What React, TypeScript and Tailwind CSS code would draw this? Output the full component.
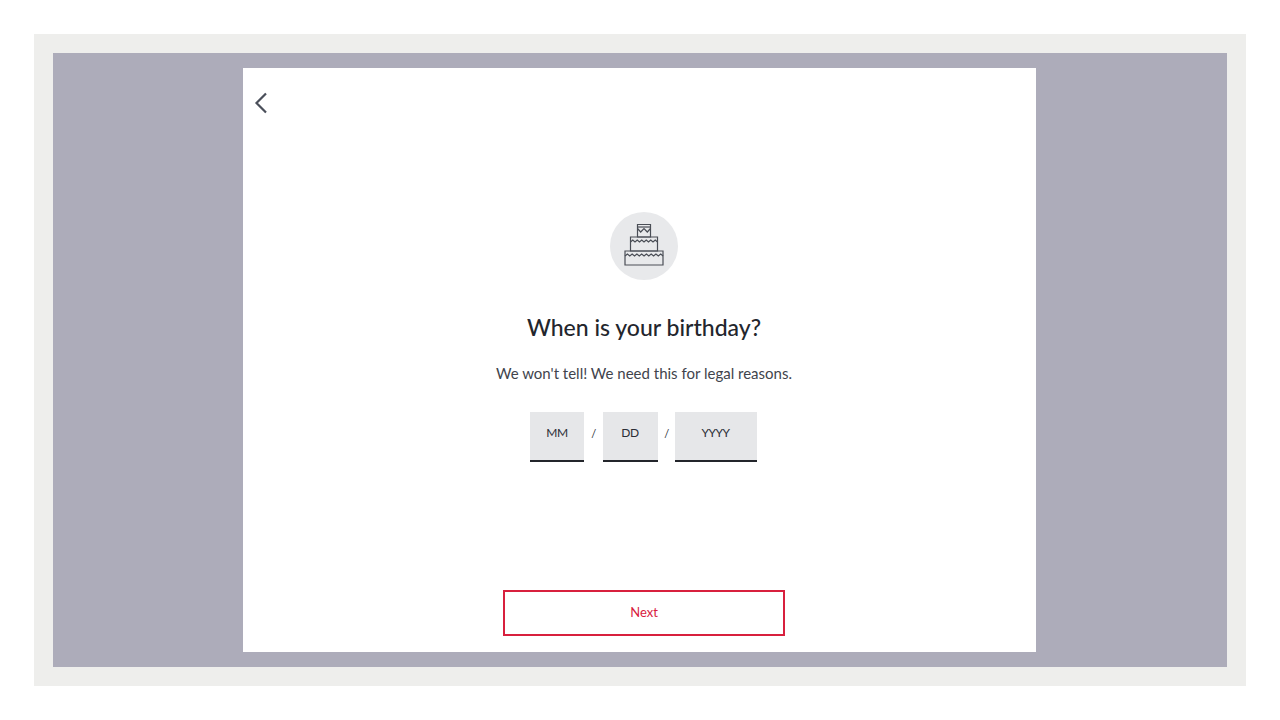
export default function App() {
  return (
    <div className="h-screen bg-white p-[34px] font-['Lato',sans-serif]">
      <div className="h-[652px] w-[1212px] bg-[#eeeeec] p-[19px]">
        <div className="h-[614px] bg-[#adacba] pl-[190px] pt-[15px]">
          <div className="h-[584px] w-[793px] bg-white flex flex-col">
            {/* Back */}
            <div className="h-[144px] pl-[9px] pt-[23px]">
              <svg width="18" height="24" viewBox="0 0 18 24" fill="none" className="text-[#4a4f5a]">
                <path d="M14 2.500 L4.500 12 L14 21.500" stroke="currentColor" strokeWidth="2.2" />
              </svg>
            </div>

            <div className="flex flex-col items-center pl-[9px]">
              {/* Cake */}
              <div className="w-[68px] h-[68px] rounded-full bg-[#e8e9eb] flex items-center justify-center pb-[3px]">
                <svg width="40" height="44" viewBox="0 0 40 44" fill="none" stroke="#4a4e56" strokeWidth="1.2">
                  <path d="M13.500 1.500h13v12.500h-13z" />
                  <path d="M13.500 4h13" />
                  <path d="M13.500 5.500l3.200 3.500 3.300-3.500 3.300 3.500 3.200-3.500" />
                  <path d="M6.500 14h27v14h-27z" />
                  <path d="M6.500 19l2.250-2 2.250 2 2.250-2 2.250 2 2.250-2 2.250 2 2.250-2 2.250 2 2.250-2 2.250 2 2.250-2 2.250 2" />
                  <path d="M1 28h38v14h-38z" />
                  <path d="M1 33l2.380-2 2.380 2 2.380-2 2.380 2 2.380-2 2.380 2 2.380-2 2.380 2 2.380-2 2.380 2 2.380-2 2.380 2 2.380-2 2.380 2 2.380-2 2.380 2" />
                </svg>
              </div>

              <h1 className="mt-[32px] text-[23px] leading-[30px] font-medium text-[#23262d]">When is your birthday?</h1>
              <p className="mt-[21px] text-[15px] leading-[20px] text-[#41444c]">We won't tell! We need this for legal reasons.</p>

              {/* Date fields */}
              <div className="mt-[29px] mr-[2px] flex items-start text-[12px] tracking-[-0.5px] text-[#2b2e36]">
                <div className="w-[54px] h-[50px] bg-[#e6e7e9] border-b-2 border-[#23252b] pt-[12px] pl-[1px] text-center">MM</div>
                <span className="w-[19px] pt-[14px] pl-[1px] text-center text-[11px]">/</span>
                <div className="w-[55px] h-[50px] bg-[#e6e7e9] border-b-2 border-[#23252b] pt-[12px] text-center">DD</div>
                <span className="w-[17px] pt-[14px] pl-[1px] text-center text-[11px]">/</span>
                <div className="w-[82px] h-[50px] bg-[#e6e7e9] border-b-2 border-[#23252b] pt-[12px] text-center">YYYY</div>
              </div>

              <button className="mt-[128px] w-[282px] h-[46px] border-2 border-[#d8203e] text-[13px] text-[#d8203e] bg-white">Next</button>
            </div>
          </div>
        </div>
      </div>
    </div>
  )
}
